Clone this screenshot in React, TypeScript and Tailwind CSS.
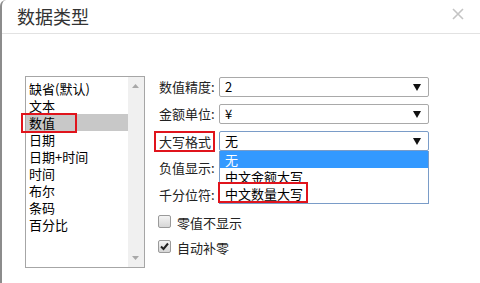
const font = "font-['Microsoft_YaHei','Noto_Sans_CJK_SC',sans-serif]";

const listItems = ["缺省(默认)", "文本", "数值", "日期", "日期+时间", "时间", "布尔", "条码", "百分比"];

function Arrow() {
  return (
    <svg width="8" height="7" viewBox="0 0 8 7" className="absolute right-[7px] top-[6px]">
      <path d="M0 0H8L4 7Z" fill="#111" />
    </svg>
  );
}

function Select({ value, focused }: { value: string; focused?: boolean }) {
  return (
    <div
      className={
        "relative w-[210px] h-[20px] rounded-[2px] border bg-white pl-[5px] text-[13px] leading-[18px] text-black " +
        (focused ? "border-[#7a9cc8]" : "border-[#a9a9a9]")
      }
    >
      {value}
      <Arrow />
    </div>
  );
}

function Checkbox({ checked, label }: { checked?: boolean; label: string }) {
  return (
    <div className="flex items-start h-[25px] pl-[4px] pt-[3px]">
      <div className="relative w-[13px] h-[13px] shrink-0 rounded-[2px] border border-[#9a9a9a] bg-gradient-to-b from-[#f4f4f4] to-[#d6d6d6]">
        {checked && (
          <svg width="11" height="11" viewBox="0 0 11 11" className="absolute left-0 top-0">
            <path d="M2 5.5L4.5 8L9 2.5" stroke="#222" strokeWidth="2" fill="none" />
          </svg>
        )}
      </div>
      <span className="ml-[6px] text-[13px] leading-[15px] text-[#222]">{label}</span>
    </div>
  );
}

export default function App() {
  return (
    <div className={`w-[480px] h-[283px] overflow-hidden bg-white ${font}`}>
      <div className="h-full rounded-tl-[6px] rounded-tr-[6px] border-l-2 border-[#8c8c8c] bg-white">
        <div className="relative h-[34px] border-b border-[#e2e2e2] pl-[15px] text-[18px] leading-[33px] text-[#333]">
          数据类型
          <svg width="12" height="12" viewBox="0 0 12 12" className="absolute right-[16px] top-[8px]">
            <path d="M1 1L11 11M11 1L1 11" stroke="#c4c4c4" strokeWidth="1.6" />
          </svg>
        </div>

        <div className="flex pl-[23px] pt-[42px]">
          {/* type list */}
          <div className="relative flex w-[120px] h-[192px] border border-[#a6a6a6]">
            <div className="flex-1 pt-[3px]">
              {listItems.map((item) => (
                <div
                  key={item}
                  className={
                    "h-[17px] pl-[3px] text-[13px] leading-[17px] text-black " +
                    (item === "数值" ? "bg-[#c8c8c8]" : "")
                  }
                >
                  {item}
                </div>
              ))}
            </div>
            <div className="relative w-[16px] bg-[#f0f0f0]">
              <svg width="7" height="4" viewBox="0 0 7 4" className="absolute left-[4px] top-[7px]">
                <path d="M0 4H7L3.5 0Z" fill="#a8a8a8" />
              </svg>
              <svg width="7" height="4" viewBox="0 0 7 4" className="absolute left-[4px] bottom-[7px]">
                <path d="M0 0H7L3.5 4Z" fill="#a8a8a8" />
              </svg>
            </div>
            <div className="absolute left-[-5px] top-[36px] w-[56px] h-[20px] border-2 border-[#e0141c]" />
          </div>

          {/* format options */}
          <div className="ml-[9px] pt-[1px] text-[13px] text-[#222]">
            {[
              ["数值精度:", "2"],
              ["金额单位:", "¥"],
            ].map(([label, value]) => (
              <div key={label} className="flex items-start h-[27px]">
                <span className="w-[65px] pl-[5px] leading-[20px]">{label}</span>
                <Select value={value} />
              </div>
            ))}
            <div className="flex items-start h-[27px]">
              <span className="w-[65px]">
                <span className="inline-block h-[21px] border-2 border-[#e0141c] pl-[3px] pr-[2px] leading-[17px]">大写格式</span>
              </span>
              <div className="relative">
                <Select value="无" focused />
                <div className="absolute left-0 top-[20px] z-10 w-[210px] h-[53px] border border-t-0 border-[#7a9cc8] bg-white text-[13px] leading-[17px] text-black">
                  <div className="h-[17px] bg-[#3399ff] pl-[5px] text-white">无</div>
                  <div className="h-[17px] pl-[5px]">中文金额大写</div>
                  <div className="relative h-[17px] pl-[5px]">
                    中文数量大写
                    <div className="absolute left-[-2px] top-[-3px] w-[90px] h-[21px] border-2 border-[#e0141c]" />
                  </div>
                </div>
              </div>
            </div>
            <div className="flex items-start h-[27px]">
              <span className="w-[65px] pl-[5px] leading-[20px]">负值显示:</span>
            </div>
            <div className="flex items-start h-[27px]">
              <span className="w-[65px] pl-[5px] leading-[20px]">千分位符:</span>
            </div>
            <Checkbox label="零值不显示" />
            <Checkbox label="自动补零" checked />
          </div>
        </div>
      </div>
    </div>
  );
}
